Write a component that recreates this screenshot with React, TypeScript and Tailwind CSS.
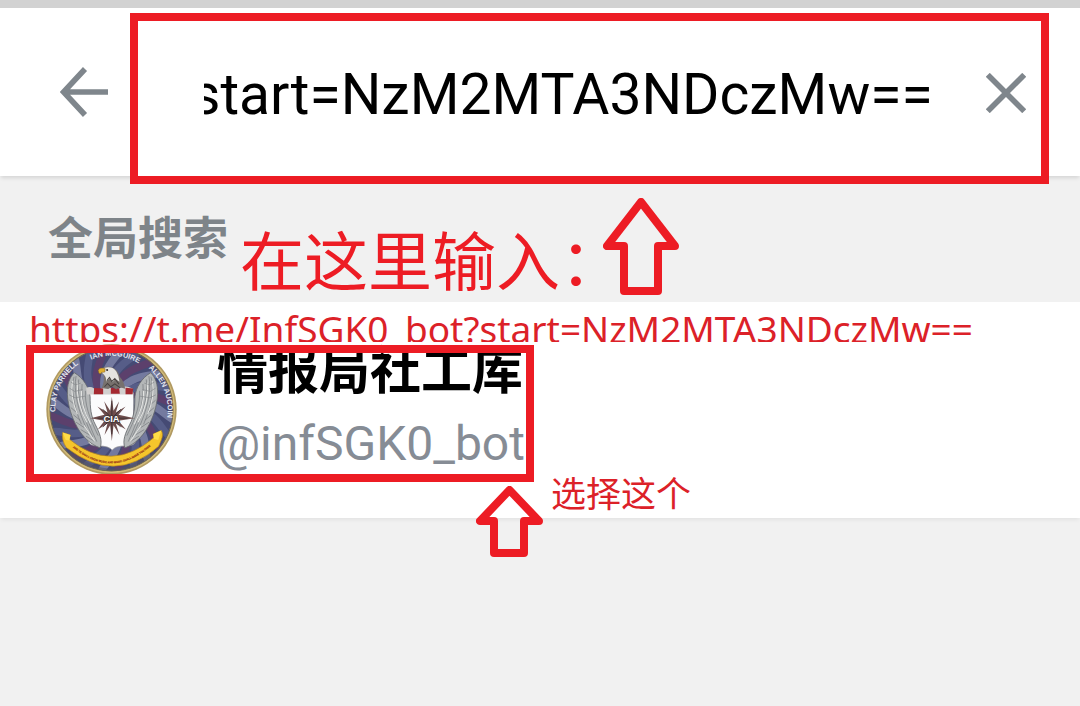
import { useLayoutEffect, useRef, useState } from "react";

const CJK = "font-['Roboto','Noto_Sans_CJK_SC',sans-serif]";
const NOTE = "font-['Noto_Sans','Noto_Sans_CJK_SC',sans-serif]";

function BackIcon() {
  return (
    <svg viewBox="0 0 48 50" className="h-[50px] w-12" fill="none" stroke="#7f868c" strokeWidth="5.6" aria-hidden="true">
      <path d="M25 2 3.6 25 25 48M3.6 25H48" />
    </svg>
  );
}

function ClearIcon() {
  return (
    <svg viewBox="0 0 40 40" className="size-10" fill="none" stroke="#7f868c" strokeWidth="5.6" aria-hidden="true">
      <path d="M1.8 1.8 38.2 38.2M38.2 1.8 1.8 38.2" />
    </svg>
  );
}

const rays = Array.from({ length: 24 }, (_, i) => i * 15);

function Wing() {
  return (
    <g>
      <path
        d="M163 218C148 232 141 252 142 284C144 318 155 352 172 382C188 410 210 432 240 443C248 420 238 398 226 374C212 348 210 322 210 290C207 262 190 234 163 218Z"
        fill="#b4b7b8"
        stroke="#64676b"
        strokeWidth="2.5"
      />
      <path
        d="M162 230C152 262 160 320 184 372M168 228C160 270 172 330 204 396M176 238C170 284 184 342 218 410M186 252C182 296 194 346 230 424M196 272C194 312 206 350 234 406M148 300l18 16M152 322l20 17M160 344l20 16M168 366l24 16M182 388l26 16M198 408l26 16"
        fill="none"
        stroke="#74777b"
        strokeWidth="2"
      />
      <path
        d="M158 242C152 272 158 312 172 342M173 248C168 286 180 330 200 366M184 272C182 300 192 336 212 372M192 376L224 424"
        fill="none"
        stroke="#e4e5e3"
        strokeWidth="3"
      />
      <path d="M152 246l14 8 16-5M148 264l16 10 24-6M147 284l18 9 30-5" fill="none" stroke="#85888b" strokeWidth="2" />
    </g>
  );
}

function Seal() {
  return (
    <svg viewBox="78 132 392 392" className="size-[131px] shrink-0" role="img" aria-label="CIA">
      <defs>
        <clipPath id="disc">
          <circle cx="274" cy="328" r="184" />
        </clipPath>
        <path id="arcLeft" d="M107 350A168 168 0 0 1 188 184" />
        <path id="arcTop" d="M195 188A161 161 0 0 1 372 201" />
        <path id="arcRight" d="M374 196A166 166 0 0 1 438 366" />
        <path id="arcMotto" d="M139 424Q274 556 410 420" />
      </defs>
      <circle cx="274" cy="328" r="195" fill="#b19a62" />
      <circle cx="274" cy="328" r="190" fill="#d2bb79" />
      <g clipPath="url(#disc)">
        <circle cx="274" cy="328" r="186" fill="#454a74" />
        {rays.map((a, i) => (
          <path
            key={a}
            d="M274 328C300 280 350 262 400 276S450 304 478 296L478 320C450 326 430 308 396 298S310 300 274 328Z"
            transform={`rotate(${a} 274 328)`}
            fill={i % 3 === 0 ? "#5c406c" : i % 3 === 1 ? "#747a9f" : "#565d88"}
          />
        ))}
        <path d="M150 450Q274 560 400 450L440 540H110Z" fill="#55545c" opacity=".55" />
      </g>
      <circle cx="274" cy="328" r="184" fill="none" stroke="#6d644c" strokeWidth="3" />

      <path d="M202 278H340V405Q349 405 347 422Q344 437 317 437Q284 437 276 450Q268 437 233 437Q207 438 203 421Q203 408 209 404Z" fill="#fbfbfc" stroke="#8c8b90" strokeWidth="2" />
      <Wing />
      <g transform="translate(554 0) scale(-1 1)">
        <Wing />
      </g>

      <g>
        <path d="M198 264Q210 257 222 265T248 264T274 265T300 264T338 266V283H201Z" fill="#d2d0cf" />
        <path d="M222 264l27 1v17h-28zM272 264l25 1 2 16h-27zM316 263l23 2-2 17h-21z" fill="#a52931" />
      </g>
      <path d="M245 264Q254 240 250 222L238 220Q235 209 246 204Q262 196 278 203Q294 210 298 229Q312 243 315 266L297 261 288 268 276 260 264 267Z" fill="#77716d" />
      <path d="M245 218Q240 207 254 203Q278 198 289 215Q296 227 298 245L286 237 277 246 269 235 258 244Q259 228 245 218Z" fill="#e5e3e0" />
      <path d="M260 242l8-10 7 12 9-9 12 17M253 260l9-10 10 10 12-9 16 12" fill="none" stroke="#46413f" strokeWidth="3" />
      <path d="M255 206Q238 200 234 211Q235 219 240 222Q242 215 254 216Z" fill="#e0ae31" stroke="#77571b" strokeWidth="1.5" />
      <circle cx="261" cy="210" r="3" fill="#322a25" />

      <path
        d="M275 290l5 42 17-29-10 34 29-18-21 25 48 10-48 8 22 26-30-18 11 34-18-29-5 47-5-47-17 29 9-34-29 18 20-26-42-8 42-10-21-25 30 18-10-34 18 29Z"
        fill="#6e4d4d"
      />
      <path d="M275 302v100M232 354h90M248 327l54 54M302 327l-54 54" stroke="#2e2628" strokeWidth="2" />
      <text x="274" y="364" textAnchor="middle" className="font-['Liberation_Sans',sans-serif] text-[28px] font-bold" fill="#fff" stroke="#3d3538" strokeWidth="4" paintOrder="stroke">
        CIA
      </text>

      <path d="M128 397L151 404 148 417Q274 521 401 412L399 401 423 391Q430 402 423 419L415 438Q284 555 139 442Q124 419 128 397Z" fill="#f5c52c" stroke="#b98719" strokeWidth="2" />
      <path d="M128 397L151 404 148 421 137 419ZM399 401L423 391 414 419 401 416Z" fill="#ffdc48" />
      <text className="font-['Liberation_Sans',sans-serif] text-[8px] font-bold" fill="#a3441a" stroke="#a3441a" strokeWidth="0.6">
        <textPath href="#arcMotto" startOffset="50%" textAnchor="middle">
          AND YE SHALL KNOW MUSIC AND MUSIC SHALL MAKE YOU FREE
        </textPath>
      </text>
      <g className="font-['Liberation_Sans',sans-serif] text-[22px] font-bold" fill="#e5e7ef">
        <text>
          <textPath href="#arcLeft" startOffset="50%" textAnchor="middle">CLAY PARNELL</textPath>
        </text>
        <text>
          <textPath href="#arcTop" startOffset="50%" textAnchor="middle">IAN MCGUIRE</textPath>
        </text>
        <text>
          <textPath href="#arcRight" startOffset="50%" textAnchor="middle">ALLEN AUCOIN</textPath>
        </text>
      </g>
    </svg>
  );
}

export default function App() {
  const [query, setQuery] = useState("start=NzM2MTA3NDczMw==");
  const field = useRef<HTMLInputElement>(null);

  // Keep the end of a long query in view.
  useLayoutEffect(() => {
    const el = field.current;
    if (el) el.scrollLeft = el.scrollWidth;
  }, [query]);

  return (
    <div className={`min-h-screen bg-[#f1f1f1] ${CJK}`}>
      <div className="h-2 bg-[#d2d2d2]" />

      <header className="relative z-10 flex h-[168px] items-center bg-white pr-[54px] pl-[60px] shadow-[0_3px_4px_-1px_rgba(0,0,0,0.12)]">
        <button type="button" aria-label="返回" className="shrink-0">
          <BackIcon />
        </button>
        <input
          ref={field}
          type="text"
          aria-label="搜索"
          value={query}
          onChange={(e) => setQuery(e.target.value)}
          className="mr-[53px] ml-24 h-20 min-w-0 flex-1 bg-transparent pt-1.5 text-[57px] text-black outline-none"
        />
        <button type="button" aria-label="清除" className="shrink-0 pt-0.5" onClick={() => setQuery("")}>
          <ClearIcon />
        </button>
        <div className="pointer-events-none absolute top-[5px] right-[31px] -bottom-2 left-[130px] border-8 border-[#ed1c24]" />
      </header>

      <section className="relative h-[126px] px-12 pt-[31px]">
        <h2 className="text-[45px] leading-[66px] font-bold text-[#7e8489]">全局搜索</h2>
        <p className={`absolute top-[41px] left-60 text-[64px] leading-[88px] whitespace-nowrap text-[#ed1c24] ${NOTE}`}>
          在这里输入：
        </p>
        <svg viewBox="0 0 76 98" className="absolute top-[22px] left-[603px] h-[98px] w-[76px]" fill="none" stroke="#ed1c24" strokeWidth="8" strokeLinejoin="round" aria-hidden="true">
          <path d="M38 4 4 48H21V93H55V48H72Z" />
        </svg>
      </section>

      <main className="relative flex h-[216px] items-start bg-white shadow-[0_3px_4px_-1px_rgba(0,0,0,0.06)]">
        <button type="button" className="flex items-start gap-10 pt-[42px] pl-[46px] text-left">
          <Seal />
          <span className="flex flex-col">
            <span className="text-[51px] leading-[56px] font-bold text-black">情报局社工库</span>
            <span className="text-[48px] leading-[88px] text-[#868c95]">@infSGK0_bot</span>
          </span>
        </button>
        <p className={`absolute top-0 left-[29px] h-10 overflow-hidden text-[37px] leading-[54px] whitespace-nowrap text-[#dc2128] ${NOTE}`}>
          https://t.me/InfSGK0_bot?start=NzM2MTA3NDczMw==
        </p>
        <div className="pointer-events-none absolute top-[43px] left-[26px] h-[137px] w-[508px] border-8 border-[#ed1c24]" />
        <p className={`absolute top-[166px] left-[551px] text-[35px] leading-[52px] whitespace-nowrap text-[#dc2128] ${NOTE}`}>
          选择这个
        </p>
        <svg viewBox="0 0 68 72" className="absolute top-[184px] left-[476px] h-[72px] w-[68px]" fill="none" stroke="#ed1c24" strokeWidth="8" strokeLinejoin="round" aria-hidden="true">
          <path d="M33.500 4 4 35H18V67H48V35H63Z" />
        </svg>
      </main>
    </div>
  );
}
